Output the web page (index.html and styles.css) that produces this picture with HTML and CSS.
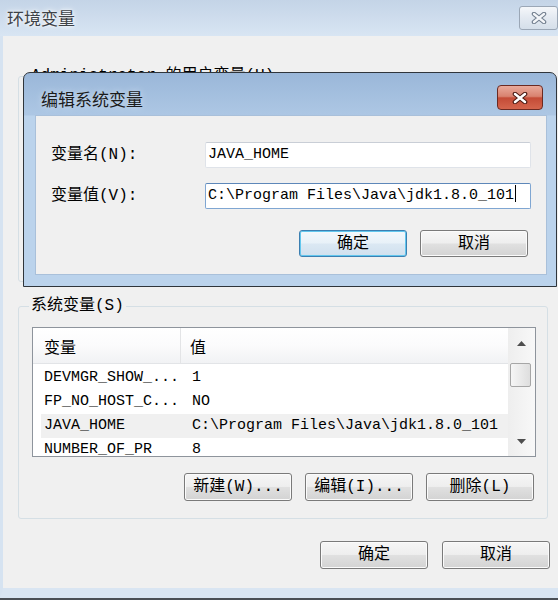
FILE: index.html
```html
<!DOCTYPE html>
<html lang="zh-CN">

<head>
  <meta charset="UTF-8">
  <title>环境变量</title>
  <link rel="stylesheet" href="styles.css">
</head>

<body>
  <div class="window">
    <div class="titlebar">
      <span class="title">环境变量</span>
      <span class="close-btn">
        <svg width="18" height="12" viewBox="0 0 18 12">
          <path d="M4 2 L14 10 M14 2 L4 10" stroke="#6f7c8c" stroke-width="4.5" stroke-linecap="round" />
          <path d="M4 2 L14 10 M14 2 L4 10" stroke="#f4f6f9" stroke-width="2.4" stroke-linecap="round" />
        </svg>
      </span>
    </div>

    <div class="client">
      <fieldset class="group user-group">
        <legend>Administrator 的用户变量(U)</legend>
        <div class="group-body"></div>
      </fieldset>

      <fieldset class="group sys-group">
        <legend>系统变量(S)</legend>
        <div class="listview">
          <div class="lv-main">
            <div class="lv-header">
              <div class="lv-col1">变量</div>
              <div class="lv-col2">值</div>
            </div>
            <div class="lv-body">
              <div class="lv-row"><span class="cell1">DEVMGR_SHOW_...</span><span>1</span></div>
              <div class="lv-row"><span class="cell1">FP_NO_HOST_C...</span><span>NO</span></div>
              <div class="lv-row selected"><span class="cell1">JAVA_HOME</span><span>C:\Program Files\Java\jdk1.8.0_101</span></div>
              <div class="lv-row"><span class="cell1">NUMBER_OF_PR</span><span>8</span></div>
            </div>
          </div>
          <div class="scrollbar">
            <div class="sb-arrow sb-up">
              <svg width="9" height="5" viewBox="0 0 9 5"><path d="M0 5 L4.5 0 L9 5 Z" fill="#4e4e4e" /></svg>
            </div>
            <div class="sb-thumb"></div>
            <div class="sb-track"></div>
            <div class="sb-arrow sb-down">
              <svg width="9" height="5" viewBox="0 0 9 5"><path d="M0 0 L4.5 5 L9 0 Z" fill="#4e4e4e" /></svg>
            </div>
          </div>
        </div>
        <div class="btn-row">
          <button class="btn">新建(W)...</button>
          <button class="btn">编辑(I)...</button>
          <button class="btn">删除(L)</button>
        </div>
      </fieldset>

      <div class="footer-row">
        <button class="btn">确定</button>
        <button class="btn">取消</button>
      </div>
    </div>

    <!-- edit dialog on top of the main window -->
    <div class="edit-dialog">
      <div class="dlg-titlebar">
        <span class="dlg-title">编辑系统变量</span>
        <span class="dlg-close">
          <svg width="18" height="12" viewBox="0 0 18 12">
            <path d="M4 2 L14 10 M14 2 L4 10" stroke="#4a1a12" stroke-width="4.6" stroke-linecap="round" />
            <path d="M4 2 L14 10 M14 2 L4 10" stroke="#ffffff" stroke-width="2.5" stroke-linecap="round" />
          </svg>
        </span>
      </div>
      <div class="dlg-client">
        <div class="form-grid">
          <label>变量名(N):</label>
          <div class="textbox">JAVA_HOME</div>
          <label>变量值(V):</label>
          <div class="textbox focused">C:\Program Files\Java\jdk1.8.0_101<span class="caret"></span></div>
        </div>
        <div class="dlg-buttons">
          <button class="btn default">确定</button>
          <button class="btn">取消</button>
        </div>
      </div>
    </div>
  </div>
</body>

</html>
```

FILE: styles.css
```css
body {
  margin: 0;
  background: #fff;
  font-family: "Liberation Mono", "Noto Sans CJK SC", monospace;
  color: #000;
}

.window {
  position: relative;
  width: 558px;
  border-bottom: 2px solid #4a4f55;
}

.titlebar {
  height: 36px;
  display: flex;
  justify-content: space-between;
  align-items: flex-start;
  padding-left: 7px;
  background: linear-gradient(180deg, #c4d4e7 0%, #d8e5f3 100%);
}

.title {
  font-family: "Noto Sans CJK SC", sans-serif;
  font-size: 17px;
  line-height: 36px;
  color: #3e4247;
  text-shadow: 0 0 6px #fff, 0 0 3px #fff;
}

.close-btn {
  margin-top: 6px;
  width: 39px;
  height: 24px;
  box-sizing: border-box;
  border: 1px solid #9ba7b6;
  border-radius: 3px;
  background: linear-gradient(180deg, #f5f7fa 0%, #e3e9f1 50%, #d5dfea 100%);
  display: flex;
  align-items: center;
  justify-content: center;
}

.client {
  height: 521px;
  background: #f0f0f0;
  border-left: 3px solid #d6e3f1;
  border-bottom: 10px solid #d9e5f2;
  padding: 31px 10px 0 15px;
}

/* group boxes */
.group {
  margin: 0;
  min-inline-size: 0;
  border: 1px solid #d5dfe5;
  border-radius: 3px;
  padding: 12px 11px 17px 13px;
}

.group legend {
  font-size: 16px;
  line-height: 18px;
  padding: 0 2px;
  margin-left: -3px;
}

.user-group .group-body {
  height: 167px;
}

.sys-group {
  margin-top: 15px;
}

/* list view */
.listview {
  height: 130px;
  box-sizing: border-box;
  border: 1px solid #8e949c;
  background: #fff;
  display: flex;
}

.lv-main {
  flex: 1;
  overflow: hidden;
}

.lv-header {
  height: 36px;
  display: flex;
  background: linear-gradient(180deg, #ffffff 0%, #fbfbfc 50%, #f1f2f4 100%);
  border-bottom: 1px solid #e2e4e7;
  box-sizing: border-box;
  font-family: "Noto Sans CJK SC", sans-serif;
  font-size: 16px;
  line-height: 36px;
}

.lv-col1 {
  width: 148px;
  padding-left: 11px;
  box-sizing: border-box;
  border-right: 1px solid #e3e4e6;
}

.lv-col2 {
  padding-left: 9px;
}

.lv-body {
  padding-top: 2px;
}

.lv-row {
  margin-left: 8px;
  height: 24px;
  display: flex;
  font-size: 15px;
  line-height: 24px;
  white-space: nowrap;
}

.lv-row.selected {
  background: #f0f0f0;
}

.cell1 {
  width: 151px;
  padding-left: 3px;
  box-sizing: border-box;
}

.scrollbar {
  width: 27px;
  display: flex;
  flex-direction: column;
  background: linear-gradient(90deg, #eeeeee 0%, #f8f8f8 100%);
}

.sb-arrow {
  display: flex;
  justify-content: center;
  align-items: center;
}

.sb-up {
  height: 30px;
}

.sb-thumb {
  margin: 5px 4px 0 2px;
  height: 22px;
  border: 1px solid #a6a6a6;
  border-radius: 2px;
  background: linear-gradient(90deg, #f6f6f6 0%, #eaeaea 50%, #dedede 100%);
}

.sb-track {
  flex: 1;
}

.sb-down {
  height: 30px;
}

/* buttons */
.btn {
  height: 28px;
  width: 108px;
  padding: 0;
  box-sizing: border-box;
  border: 1px solid #7a7a7a;
  border-radius: 3px;
  background: linear-gradient(180deg, #f6f6f6 0%, #eeeeee 48%, #e0e0e0 52%, #d3d3d3 100%);
  box-shadow: inset 0 0 0 1px #fbfbfb;
  font-family: "Liberation Mono", "Noto Sans CJK SC", monospace;
  font-size: 16px;
  line-height: 24px;
  color: #000;
}

.btn-row {
  margin-top: 16px;
  margin-right: 2px;
  display: flex;
  justify-content: flex-end;
  gap: 13px;
}

.footer-row {
  margin-top: 22px;
  margin-right: -2px;
  display: flex;
  justify-content: flex-end;
  gap: 14px;
}

/* edit dialog */
.edit-dialog {
  position: absolute;
  left: 23px;
  top: 72px;
  width: 534px;
  height: 215px;
  box-sizing: border-box;
  border: 1px solid #2f353b;
  border-radius: 7px 7px 0 0;
  padding: 0 9px 11px 11px;
  background: linear-gradient(180deg, #9ab7d9 0px, #adc7e4 42px, #bbd3ec 43px, #bbd3ec 100%);
  display: flex;
  flex-direction: column;
}

.dlg-titlebar {
  height: 42px;
  display: flex;
  justify-content: space-between;
  align-items: flex-start;
  padding-left: 6px;
}

.dlg-title {
  font-family: "Noto Sans CJK SC", sans-serif;
  font-size: 17px;
  line-height: 26px;
  padding-top: 13px;
  color: #1b1b1b;
  text-shadow: 0 0 6px #d6e4f3;
}

.dlg-close {
  margin-top: 12px;
  margin-right: 4px;
  width: 46px;
  height: 25px;
  box-sizing: border-box;
  border: 1px solid #6b2a22;
  border-radius: 4px;
  background: linear-gradient(180deg, #e9aa9b 0%, #d9826f 45%, #c44b36 52%, #d4654d 100%);
  display: flex;
  align-items: center;
  justify-content: center;
}

.dlg-client {
  flex: 1;
  background: #f0f0f0;
  border: 1px solid #a9c0da;
  padding: 26px 15px 0 15px;
}

.form-grid {
  display: grid;
  grid-template-columns: 154px 1fr;
  row-gap: 15px;
  align-items: center;
}

.form-grid label {
  font-size: 16px;
  line-height: 20px;
}

.textbox {
  height: 26px;
  box-sizing: border-box;
  border: 1px solid #dfe3e9;
  border-top-color: #c9ced6;
  border-radius: 2px;
  background: #fff;
  padding-left: 2px;
  font-size: 15px;
  line-height: 24px;
  white-space: nowrap;
}

.textbox.focused {
  border-color: #7fa6d2;
  border-top-color: #5d87b9;
}

.caret {
  display: inline-block;
  width: 1px;
  height: 17px;
  background: #000;
  vertical-align: -3px;
  margin-left: 1px;
}

.dlg-buttons {
  margin-top: 21px;
  margin-right: 3px;
  display: flex;
  justify-content: flex-end;
  gap: 13px;
}

.dlg-buttons .btn {
  height: 27px;
}

.btn.default {
  border-color: #3c7fb1;
  background: linear-gradient(180deg, #f3f8fc 0%, #e8f1f8 48%, #dbe8f3 52%, #d0e0ee 100%);
  box-shadow: inset 0 0 0 1px #62c7ee;
}
```
